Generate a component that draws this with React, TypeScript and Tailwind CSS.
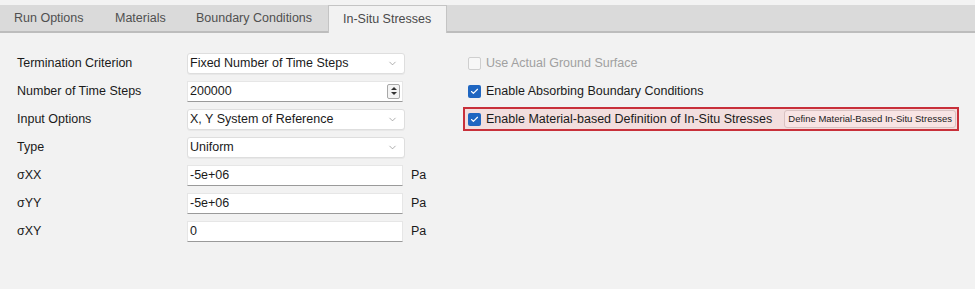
import { Check, ChevronDown } from 'lucide-react'

const tabs = [
  { name: 'Run Options', w: 'w-[99px] pl-[14px]' },
  { name: 'Materials', w: 'w-[81px] pl-[16px]' },
  { name: 'Boundary Conditions', w: 'w-[148px] pl-[16px]' },
]

function Dropdown({ value }: { value: string }) {
  return (
    <div className="flex h-[21px] w-[218px] items-center justify-between rounded-[3px] border border-[#dedede] bg-white pl-[2px] pr-[6px] shadow-[0_1px_0_rgba(0,0,0,0.04)]">
      <span>{value}</span>
      <ChevronDown className="h-[11px] w-[11px] text-[#8a8a8a]" strokeWidth={1.5} />
    </div>
  )
}

function TextInput({ value, spinner }: { value: string; spinner?: boolean }) {
  return (
    <div className="flex h-[21px] w-[216px] items-center justify-between border border-b-[#9a9a9a] border-[#e6e6e6] bg-white pl-[2px] pr-[2px]">
      <span>{value}</span>
      {spinner ? (
        <div className="flex h-[15px] w-[13px] flex-col items-center justify-center gap-[2px] rounded-[2px] border border-[#a8a8a8] bg-[#f4f4f4]">
          <span className="h-0 w-0 border-x-[3px] border-b-[3px] border-x-transparent border-b-[#333]" />
          <span className="h-0 w-0 border-x-[3px] border-t-[3px] border-x-transparent border-t-[#333]" />
        </div>
      ) : null}
    </div>
  )
}

function CheckBox({ checked, disabled }: { checked?: boolean; disabled?: boolean }) {
  if (checked) {
    return (
      <span className="flex h-[13px] w-[13px] shrink-0 items-center justify-center rounded-[2px] bg-[#1f66c1]">
        <Check className="h-[9px] w-[9px] text-white" strokeWidth={3} />
      </span>
    )
  }
  return (
    <span
      className={`h-[13px] w-[13px] shrink-0 rounded-[2px] border ${disabled ? 'border-[#cfcfcf] bg-[#f7f7f7]' : 'border-[#888] bg-white'}`}
    />
  )
}

const rows: { label: string; control: JSX.Element; unit?: string }[] = [
  { label: 'Termination Criterion', control: <Dropdown value="Fixed Number of Time Steps" /> },
  { label: 'Number of Time Steps', control: <TextInput value="200000" spinner /> },
  { label: 'Input Options', control: <Dropdown value="X, Y System of Reference" /> },
  { label: 'Type', control: <Dropdown value="Uniform" /> },
  { label: 'σXX', control: <TextInput value="-5e+06" />, unit: 'Pa' },
  { label: 'σYY', control: <TextInput value="-5e+06" />, unit: 'Pa' },
  { label: 'σXY', control: <TextInput value="0" />, unit: 'Pa' },
]

export default function App() {
  return (
    <div className="h-[289px] w-[975px] overflow-hidden bg-[#f2f2f2] font-['Liberation_Sans',Arial,sans-serif] text-[12.5px] text-[#1a1a1a]">
      <div className="h-[5px] bg-[#f3f3f3]" />

      <div className="flex h-[28px] items-stretch border-b-2 border-[#bdbdbd] bg-[#dadada]">
        {tabs.map((tab) => (
          <div key={tab.name} className={`flex items-center text-[#505050] ${tab.w}`}>
            {tab.name}
          </div>
        ))}
        <div className="relative -mb-[2px] flex w-[119px] items-center border border-b-0 border-[#c4c4c4] bg-[#f2f2f2] pl-[14px] text-[#4a4a4a]">
          In-Situ Stresses
        </div>
      </div>

      <div className="flex pt-[16px]">
        <div className="flex w-[463px] flex-col pl-[17px]">
          {rows.map((row) => (
            <div key={row.label} className="flex h-[28px] items-center">
              <span className="w-[170px]">{row.label}</span>
              {row.control}
              {row.unit ? <span className="ml-[8px]">{row.unit}</span> : null}
            </div>
          ))}
        </div>

        <div className="flex w-[496px] flex-col">
          <div className="flex h-[28px] items-center gap-[5px] pl-[5px] text-[#a0a0a0]">
            <CheckBox disabled />
            <span>Use Actual Ground Surface</span>
          </div>
          <div className="flex h-[28px] items-center gap-[5px] pl-[5px]">
            <CheckBox checked />
            <span>Enable Absorbing Boundary Conditions</span>
          </div>
          <div className="mt-[2px] flex h-[24px] items-center gap-[5px] border-2 border-[#c8303a] bg-[#f2dede] pl-[3px] pr-[1px]">
            <CheckBox checked />
            <span>Enable Material-based Definition of In-Situ Stresses</span>
            <button
              type="button"
              className="ml-auto flex h-[18px] items-center rounded-[3px] border border-[#d9c2c2] bg-[#f8e4e4] px-[3px] text-[9.5px] text-[#1a1a1a]"
            >
              Define Material-Based In-Situ Stresses
            </button>
          </div>
        </div>
      </div>
    </div>
  )
}
